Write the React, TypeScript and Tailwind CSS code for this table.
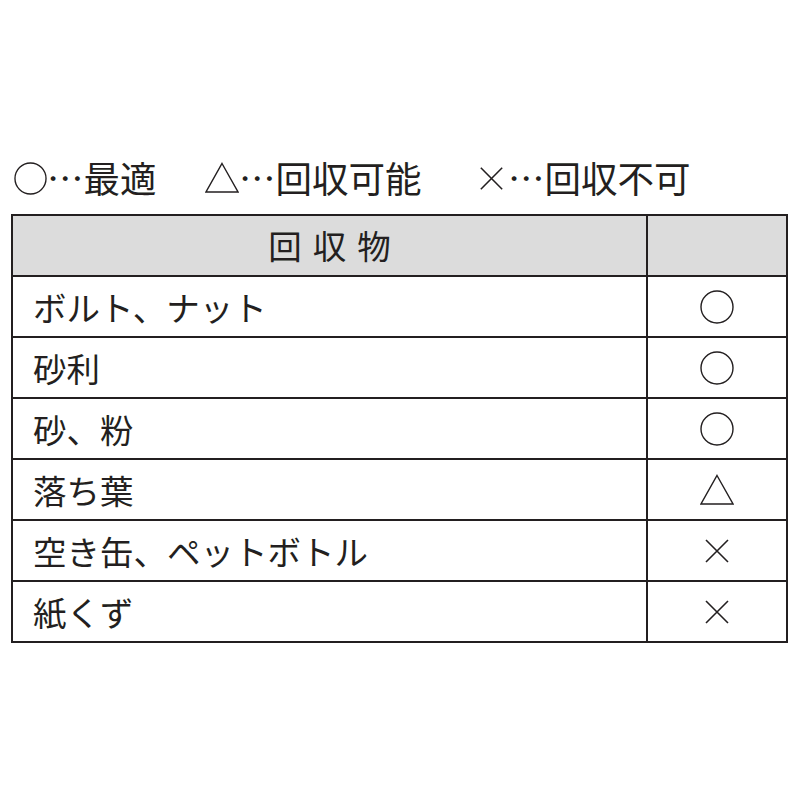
const font = { fontFamily: '"Noto Sans CJK JP", "Noto Sans", sans-serif' };

type Row = { name: string; mark: "○" | "△" | "×" };

const rows: Row[] = [
  { name: "ボルト、ナット", mark: "○" },
  { name: "砂利", mark: "○" },
  { name: "砂、粉", mark: "○" },
  { name: "落ち葉", mark: "△" },
  { name: "空き缶、ペットボトル", mark: "×" },
  { name: "紙くず", mark: "×" },
];

function Mark({ kind, size = 34 }: { kind: Row["mark"]; size?: number }) {
  if (kind === "○")
    return (
      <svg width={size} height={size} viewBox="0 0 34 34" className="block">
        <circle cx="17" cy="17" r="16" fill="none" stroke="#231f20" strokeWidth="1.4" />
      </svg>
    );
  if (kind === "△")
    return (
      <svg width={size} height={size} viewBox="0 0 34 34" className="block">
        <path d="M17 2.5 L33 31 L1 31 Z" fill="none" stroke="#231f20" strokeWidth="1.4" strokeLinejoin="miter" />
      </svg>
    );
  return (
    <svg width={size} height={size} viewBox="0 0 34 34" className="block">
      <path d="M6 6 L28 28 M28 6 L6 28" fill="none" stroke="#231f20" strokeWidth="1.6" />
    </svg>
  );
}

export default function App() {
  return (
    <div className="w-[800px] h-[800px] bg-white text-[#231f20]" style={font}>
      <div className="pt-[156px] pl-[14px] flex items-center text-[36.5px] leading-[44px] font-normal">
        <div className="flex items-center w-[191px]">
          <Mark kind="○" size={33} />
          <span>…最適</span>
        </div>
        <div className="flex items-center w-[270px]">
          <Mark kind="△" size={34} />
          <span>…回収可能</span>
        </div>
        <div className="flex items-center">
          <Mark kind="×" size={33} />
          <span>…回収不可</span>
        </div>
      </div>

      <table className="ml-[11px] mt-[14px] w-[777px] border-collapse border-2 border-[#231f20]">
        <thead>
          <tr className="h-[61px] bg-[#dcdcdc]">
            <th className="border-2 border-[#231f20] w-[635px] text-[33.5px] font-normal tracking-[11px] text-center pl-[11px]">
              回収物
            </th>
            <th className="border-2 border-[#231f20]" />
          </tr>
        </thead>
        <tbody>
          {rows.map((r) => (
            <tr key={r.name} className="h-[61px]">
              <td className="border-2 border-[#231f20] pl-[20px] text-[33.5px] font-normal leading-none">{r.name}</td>
              <td className="border-2 border-[#231f20]">
                <div className="flex justify-center">
                  <Mark kind={r.mark} />
                </div>
              </td>
            </tr>
          ))}
        </tbody>
      </table>
    </div>
  );
}
